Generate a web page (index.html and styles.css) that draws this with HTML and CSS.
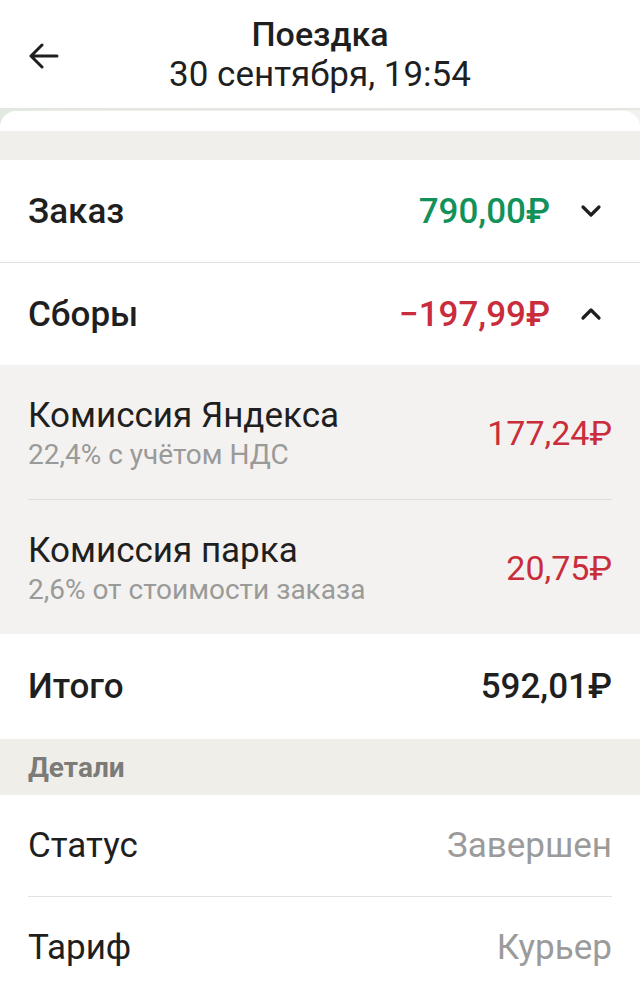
FILE: index.html
```html
<!DOCTYPE html>
<html lang="ru">
<head>
	<meta charset="UTF-8">
	<meta name="viewport" content="width=device-width, initial-scale=1.0">
	<title>Поездка</title>
	<link rel="stylesheet" href="styles.css">
</head>
<body>
	<div class="header">
		<div class="back">
			<svg width="30" height="26" viewBox="0 0 30 26"><path d="M28 13H3M13 2L2 13l11 11" fill="none" stroke="#1f1f1f" stroke-width="3" stroke-linecap="round" stroke-linejoin="round"/></svg>
		</div>
		<div class="titles">
			<div class="title">Поездка</div>
			<div class="subtitle">30 сентября, 19:54</div>
		</div>
		<div></div>
	</div>

	<div class="sheet-edge"><div class="sheet-top"></div></div>
	<div class="band"></div>

	<div class="row row-border">
		<span class="label">Заказ</span>
		<span class="amount green">790,00₽</span>
		<svg class="chev" width="22" height="14" viewBox="0 0 22 14"><path d="M3 3l8 8 8-8" fill="none" stroke="#1f1f1f" stroke-width="3.2" stroke-linecap="round" stroke-linejoin="round"/></svg>
	</div>
	<div class="row">
		<span class="label">Сборы</span>
		<span class="amount red">−197,99₽</span>
		<svg class="chev" width="22" height="14" viewBox="0 0 22 14"><path d="M3 11l8-8 8 8" fill="none" stroke="#1f1f1f" stroke-width="3.2" stroke-linecap="round" stroke-linejoin="round"/></svg>
	</div>

	<div class="fees">
		<div class="fee fee-border">
			<div class="fee-text">
				<div class="fee-name">Комиссия Яндекса</div>
				<div class="fee-note">22,4% с учётом НДС</div>
			</div>
			<span class="fee-sum">177,24₽</span>
		</div>
		<div class="fee">
			<div class="fee-text">
				<div class="fee-name">Комиссия парка</div>
				<div class="fee-note">2,6% от стоимости заказа</div>
			</div>
			<span class="fee-sum">20,75₽</span>
		</div>
	</div>

	<div class="row total">
		<span class="label">Итого</span>
		<span class="amount">592,01₽</span>
	</div>

	<div class="section">Детали</div>

	<div class="details">
		<div class="detail detail-border">
			<span>Статус</span>
			<span class="detail-value">Завершен</span>
		</div>
		<div class="detail">
			<span>Тариф</span>
			<span class="detail-value">Курьер</span>
		</div>
	</div>
</body>
</html>
```

FILE: styles.css
```css
body {
	font-family: Roboto, "Noto Sans", sans-serif;
	margin: 0;
	padding: 0;
	background-color: #fff;
	color: #1f1f1f;
	overflow: hidden;
}
.header {
	display: grid;
	grid-template-columns: 80px 1fr 80px;
	align-items: center;
	height: 108px;
	border-bottom: 2px solid #e4e6e2;
}
.back {
	padding-left: 29px;
	padding-top: 4px;
	display: flex;
}
.titles {
	text-align: center;
	padding-top: 2px;
}
.title {
	font-size: 34px;
	font-weight: 500;
	line-height: 40px;
}
.subtitle {
	font-size: 35px;
	line-height: 42px;
}
.sheet-edge {
	background: linear-gradient(90deg, #dfeadd 0, #eef0ec 12%, #f2f2f0 100%);
	padding-top: 1px;
}
.sheet-top {
	height: 20px;
	background-color: #fff;
	border-radius: 16px 16px 0 0;
}
.band {
	height: 29px;
	background-color: #f0efeb;
}
.row {
	display: flex;
	align-items: center;
	height: 102px;
	padding: 0 28px;
}
.row-border {
	border-bottom: 1px solid #e2e2e0;
}
.label {
	font-size: 35px;
	font-weight: 500;
	flex: 1;
}
.amount {
	font-size: 35px;
	font-weight: 500;
}
.green {
	color: #13915a;
}
.red {
	color: #c92d3b;
}
.chev {
	margin-left: 30px;
	margin-right: 10px;
}
.fees {
	background-color: #f3f2f0;
	padding: 0 28px;
}
.fee {
	display: flex;
	align-items: center;
	justify-content: space-between;
	height: 133px;
	padding-bottom: 1px;
}
.fee-border {
	border-bottom: 1px solid #dddcd8;
}
.fee-text {
	padding-top: 6px;
}
.fee-name {
	font-size: 35px;
	line-height: 40px;
}
.fee-note {
	font-size: 28px;
	color: #9a9a98;
	line-height: 38px;
}
.fee-sum {
	font-size: 34px;
	color: #c92d3b;
	padding-top: 2px;
}
.total {
	height: 105px;
}
.section {
	height: 56px;
	background-color: #efeee9;
	color: #7c7b78;
	font-size: 28px;
	font-weight: bold;
	line-height: 58px;
	padding: 0 28px;
}
.details {
	padding: 0 28px;
}
.detail {
	display: flex;
	align-items: center;
	justify-content: space-between;
	height: 101px;
	font-size: 35px;
}
.detail-border {
	border-bottom: 1px solid #e2e2e0;
}
.detail-value {
	color: #9b9b9b;
}
```
